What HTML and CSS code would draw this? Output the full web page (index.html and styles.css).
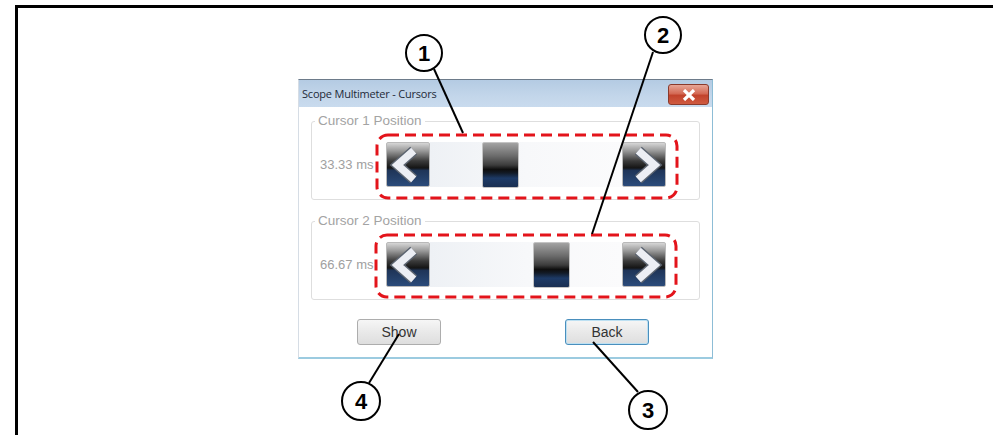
FILE: index.html
```html
<!DOCTYPE html>
<html lang="en">
<head>
    <meta charset="UTF-8">
    <meta name="viewport" content="width=device-width, initial-scale=1.0">
    <title>Scope Multimeter - Cursors</title>
    <link rel="stylesheet" href="styles.css">
</head>
<body>
    <div class="figure">
        <!-- 对话框截图 -->
        <div class="dialog">
            <div class="titlebar">
                <span class="title">Scope Multimeter - Cursors</span>
                <span class="close">
                    <svg width="14" height="12" viewBox="0 0 14 12">
                        <path d="M2 1 L12 11 M12 1 L2 11" class="x"/>
                    </svg>
                </span>
            </div>
            <div class="dialog-body">
                <fieldset class="group">
                    <legend>Cursor 1 Position</legend>
                    <div class="row">
                        <span class="value">33.33 ms</span>
                        <div class="slider">
                            <span class="arrow">
                                <svg width="44" height="44" viewBox="0 0 44 44">
                                    <polyline points="28,7 11,22 28,37" class="chev-edge"/>
                                    <polyline points="28,7 11,22 28,37" class="chev"/>
                                </svg>
                            </span>
                            <div class="track">
                                <span class="thumb" style="margin-left:52px"></span>
                            </div>
                            <span class="arrow">
                                <svg width="44" height="44" viewBox="0 0 44 44">
                                    <polyline points="16,7 33,22 16,37" class="chev-edge"/>
                                    <polyline points="16,7 33,22 16,37" class="chev"/>
                                </svg>
                            </span>
                        </div>
                    </div>
                </fieldset>
                <fieldset class="group">
                    <legend>Cursor 2 Position</legend>
                    <div class="row">
                        <span class="value">66.67 ms</span>
                        <div class="slider">
                            <span class="arrow">
                                <svg width="44" height="44" viewBox="0 0 44 44">
                                    <polyline points="28,7 11,22 28,37" class="chev-edge"/>
                                    <polyline points="28,7 11,22 28,37" class="chev"/>
                                </svg>
                            </span>
                            <div class="track">
                                <span class="thumb" style="margin-left:103px"></span>
                            </div>
                            <span class="arrow">
                                <svg width="44" height="44" viewBox="0 0 44 44">
                                    <polyline points="16,7 33,22 16,37" class="chev-edge"/>
                                    <polyline points="16,7 33,22 16,37" class="chev"/>
                                </svg>
                            </span>
                        </div>
                    </div>
                </fieldset>
                <div class="buttons">
                    <button class="btn">Show</button>
                    <button class="btn default">Back</button>
                </div>
            </div>
        </div>
    </div>

    <!-- 标注：编号圆圈、引线、红色虚线框 -->
    <svg class="callouts" width="993" height="435" viewBox="0 0 993 435">
        <rect x="377" y="135" width="300" height="63" rx="11" class="dash"/>
        <rect x="376" y="235" width="300" height="62" rx="11" class="dash"/>

        <line x1="434" y1="69" x2="463" y2="133"/>
        <line x1="653" y1="52" x2="592" y2="234"/>
        <line x1="399" y1="334" x2="369" y2="383"/>
        <line x1="593" y1="342" x2="638" y2="392"/>

        <circle cx="424" cy="53" r="18"/>
        <text x="424" y="61">1</text>
        <circle cx="663" cy="35" r="18"/>
        <text x="663" y="43">2</text>
        <circle cx="648" cy="410" r="19"/>
        <text x="648" y="418">3</text>
        <circle cx="361" cy="401" r="19"/>
        <text x="361" y="409">4</text>
    </svg>
</body>
</html>
```

FILE: styles.css
```css
*{
    margin: 0;
    padding: 0;
    box-sizing: border-box;
}

body{
    width: 993px;
    height: 435px;
    overflow: hidden;
    background: #fff;
    font-family: "Liberation Sans", Arial, sans-serif;
    position: relative;
}

.figure{
    margin: 5px 0 0 15px;
    height: 430px;
    border-top: 3px solid #000;
    border-left: 3px solid #000;
    padding: 71px 0 0 280px;
}

/* 对话框 */
.dialog{
    width: 415px;
    height: 280px;
    background: #fff;
    border: 1px solid #d6dde5;
    border-top: 1px solid #6d7b8a;
    border-right: 1px solid #8dbdd6;
    border-bottom: 2px solid #9ccbe0;
    display: flex;
    flex-direction: column;
}

.titlebar{
    height: 27px;
    background: linear-gradient(#b4cbe3, #c3d6ea 60%, #c9dbee);
    display: flex;
    align-items: center;
    justify-content: space-between;
    padding: 0 3px 0 3px;
}

.title{
    font-family: "Open Sans", "Liberation Sans", sans-serif;
    font-size: 11px;
    color: #1e2a38;
    letter-spacing: -0.2px;
}

.close{
    width: 41px;
    height: 21px;
    margin-top: 2px;
    border: 1px solid #8a3a2c;
    border-radius: 3px;
    background: linear-gradient(#e7a697, #d46a55 45%, #c2432c 55%, #cf5a40);
    display: flex;
    align-items: center;
    justify-content: center;
}

.x{
    fill: none;
    stroke: #fff;
    stroke-width: 3.2;
}

.dialog-body{
    flex: 1;
    display: flex;
    flex-direction: column;
    padding-top: 7px;
}

.group{
    margin: 0 12px 14px 12px;
    border: 1px solid #dedede;
    border-radius: 3px;
    padding: 14px 0 12px 8px;
}

.group legend{
    margin-left: -5px;
    padding: 0 3px;
    font-size: 13.5px;
    line-height: 14px;
    color: #a3a3a3;
}

.row{
    display: flex;
    align-items: center;
}

.value{
    width: 66px;
    font-size: 13px;
    color: #a0a0a0;
}

.slider{
    display: flex;
    align-items: center;
    width: 280px;
}

.arrow{
    width: 44px;
    height: 45px;
    border: 1px solid #b9b9b9;
    border-radius: 2px;
    background: linear-gradient(#d6d6d6 0%, #9a9a9a 18%, #3a3a3a 42%, #151515 58%, #1f3558 64%, #2b4b7a 100%);
    display: flex;
    align-items: center;
    justify-content: center;
}

.chev-edge{
    fill: none;
    stroke: #5c6470;
    stroke-width: 11;
    stroke-linejoin: miter;
}

.chev{
    fill: none;
    stroke: #eceef4;
    stroke-width: 8;
    stroke-linejoin: miter;
}

.track{
    flex: 1;
    height: 45px;
    background: linear-gradient(90deg, #eef1f5, #f7f8fa 50%, #fbfbfc);
    display: flex;
    align-items: center;
}

.thumb{
    width: 37px;
    height: 46px;
    border: 1px solid #c4c4c4;
    border-radius: 2px;
    background: linear-gradient(#a3a3a3 0%, #6a6a6a 30%, #3c3c3c 50%, #0e0e0e 60%, #121a26 68%, #1d3a66 80%, #1a2f52 100%);
}

.buttons{
    display: flex;
    gap: 124px;
    padding: 5px 0 0 58px;
}

.btn{
    width: 84px;
    height: 26px;
    border: 1px solid #adadad;
    border-radius: 3px;
    background: linear-gradient(#f6f6f6, #e9e9e9 50%, #dedede);
    font-family: "Liberation Sans", Arial, sans-serif;
    font-size: 14px;
    color: #333;
}

.btn.default{
    border-color: #4a8fbd;
    box-shadow: inset 0 0 0 1px #bde0f2;
}

/* 标注层 */
.callouts{
    position: absolute;
    left: 0;
    top: 0;
    pointer-events: none;
}

.callouts line{
    stroke: #000;
    stroke-width: 2;
}

.callouts circle{
    fill: #fff;
    stroke: #000;
    stroke-width: 2;
}

.callouts text{
    font-family: "Liberation Sans", Arial, sans-serif;
    font-weight: bold;
    font-size: 22px;
    text-anchor: middle;
    fill: #000;
}

.dash{
    fill: none;
    stroke: #e3141b;
    stroke-width: 3;
    stroke-dasharray: 11 6;
}
```
